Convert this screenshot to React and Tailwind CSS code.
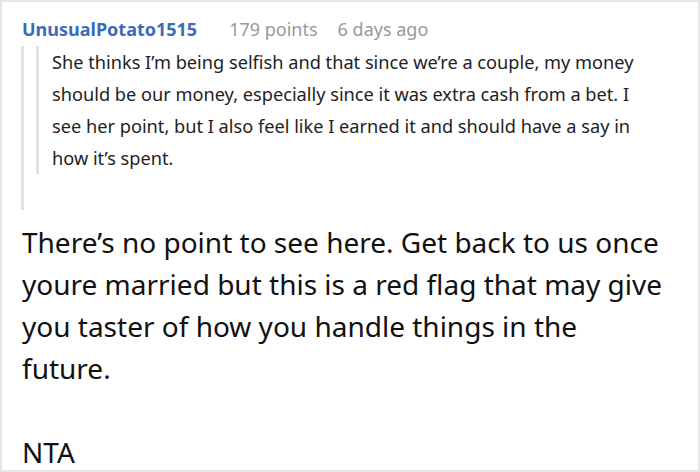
import React from 'react';

const quote = [
  'She thinks I’m being selfish and that since we’re a couple, my money should be our money, especially since it was extra cash from a bet. I see her point, but I also feel like I earned it and should have a say in how it’s spent.',
];

const App = () => {
  return (
    <div
      className="w-[700px] h-[472px] overflow-hidden border-2 border-[#e6e6e6] bg-white"
      style={{ fontFamily: '"Noto Sans", sans-serif' }}
    >
      <div className="pl-[19px] pt-[15px]">
        <div className="flex items-baseline leading-[24px] text-[18px] mb-[5px] ml-[1px]">
          <span className="font-bold text-[#3b6bb8]">UnusualPotato1515</span>
          <span className="ml-8 text-[#999999]">179 points</span>
          <span className="ml-5 text-[#999999]">6 days ago</span>
        </div>

        <div className="w-fit border-l-[3px] border-[#e3e3e3] pl-3 pb-9">
          <div className="w-[616px] border-l-[3px] border-[#e3e3e3] pl-[13px] text-[18.2px] leading-[32px] text-[#222222]">
            {quote.map((q, i) => (
              <p key={i}>{q}</p>
            ))}
          </div>
        </div>

        <div className="mt-[11px] ml-[1px] w-[642px] text-[28px] leading-[42px] text-[#111111]">
          <p>
            There’s no point to see here. Get back to us once youre married but this is a red flag that may give you taster of how you handle things in the future.
          </p>
          <p className="mt-[42px]">NTA</p>
        </div>
      </div>
    </div>
  );
};

export default App;
